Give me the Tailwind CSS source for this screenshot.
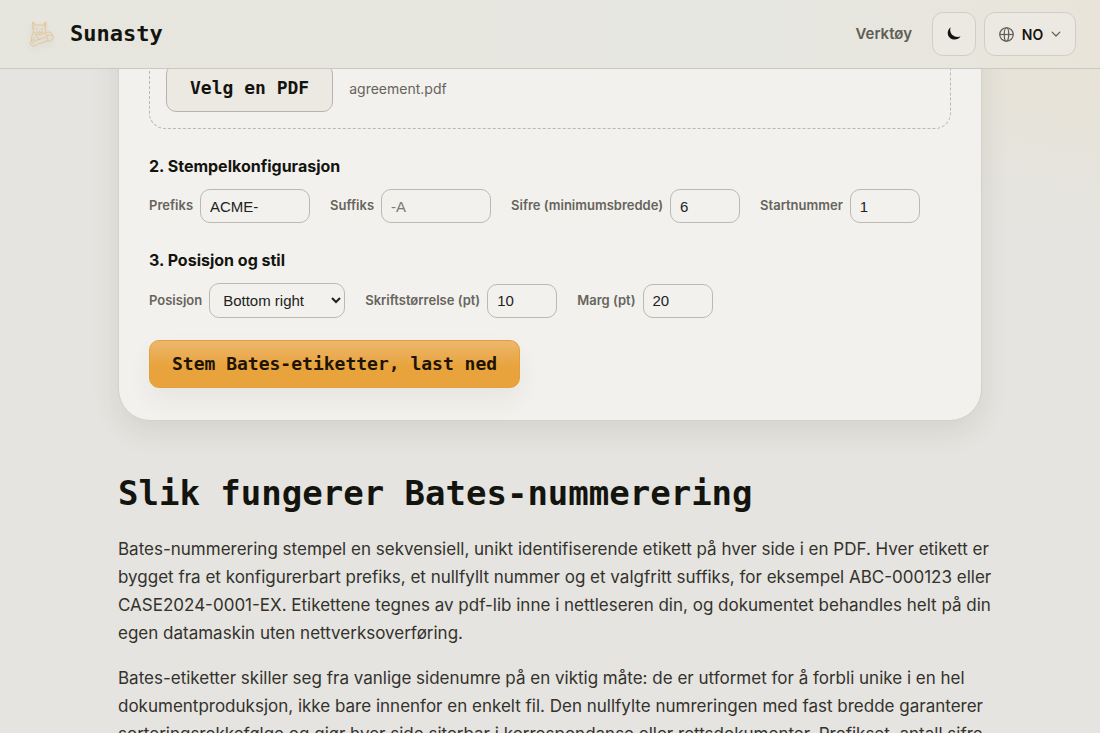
<!DOCTYPE html>
<html lang="no">
<head>
  <meta charset="UTF-8">
  <meta name="viewport" content="width=device-width, initial-scale=1.0">
  <script src="https://cdn.jsdelivr.net/npm/@tailwindcss/browser@4"></script>
  <title>Bates-nummerering - Sunasty</title>
</head>
<body class="bg-[#e5e4e0] bg-[radial-gradient(ellipse_280px_230px_at_1090px_0px,#e8e2d2,transparent)] bg-no-repeat font-['Inter',sans-serif] text-[#14140f]">

  <!-- Header -->
  <header class="fixed inset-x-0 top-0 z-10 flex h-[69px] items-center justify-between border-b border-[#cac9c3] bg-linear-to-r from-[#e6e6de] via-[#e7e7e1] via-70% to-[#e8e4d9] pr-6 pl-7">
    <a href="#" class="flex items-center gap-4">
      <svg class="size-[26px] drop-shadow-md" viewBox="0 0 26 26" fill="none" stroke="#e8bf8a" stroke-width="0.9" stroke-linejoin="round" stroke-linecap="round" aria-hidden="true">
        <path d="M5 7.500 4.600 1l4 3.300q2.700-.7 5.400 0l4-3.300-.4 6.500c.4 3.800-2.500 6-6.500 6S4.600 11.300 5 7.500z"/>
        <path d="M6 2.800 6.200 6M16.500 2.800 16.300 6"/>
        <path d="M5.200 11.500C3.800 14.500 3 18 3.500 20.500M17 11.500c1.300 1.300 2 3 2 5"/>
        <path d="M8 13.500c.5 2 1.500 3.500 3 4.500M6 16.500l-.5 3"/>
        <path d="M4.500 19c-2.500 1.500-3 5.500.5 6 1.500 0 3-1 4.500-1.800l6.500-2c2.500-.7 4.500-1.500 3.500-3.700-1-1.800-3.500-.8-5.500 0L7.500 19.500 4.500 22"/>
        <path d="M18 11.800c2-1.500 5-1 6.200 1.200 1.300 2.300 1.300 5-.4 6.200-1.300.8-3 .8-4.800.6M19.500 14.500c1.500-1 3-1 4.200.2"/>
        <path d="M8 7.800h1.200M13.500 7.800h1.200M10.800 9.800l.6.6.6-.6M8.300 11q3 1.600 6.200 0"/>
      </svg>
      <span class="font-['DejaVu_Sans_Mono',monospace] text-[22px] leading-8 font-bold">Sunasty</span>
    </a>
    <nav class="flex items-center gap-2">
      <a href="#" class="mr-3 text-[15px] font-semibold text-[#5f5d54]">Verktøy</a>
      <button type="button" aria-label="Mørkt tema" class="flex size-11 items-center justify-center rounded-[11px] border border-[#d0cec6] bg-[#ece9e2]">
        <svg class="size-[14px]" viewBox="0 0 14 14" fill="#14140f" aria-hidden="true">
          <path d="M3.600.2C-.1 3.300-.2 8.300 3 10.900c3.300 2.600 8.300 2 10.600-1.300-2.800.9-6 .5-8.200-1.500C3.300 6 2.700 3 3.600.2z"/>
        </svg>
      </button>
      <button type="button" class="flex h-11 w-[92px] items-center justify-center gap-2 rounded-[11px] border border-[#d0cec6] bg-[#ece9e2] text-[14px] font-semibold">
        <svg class="size-[15px]" viewBox="0 0 16 16" fill="none" stroke="#5f5d54" stroke-width="1.300" aria-hidden="true">
          <circle cx="8" cy="8" r="7.200"/>
          <ellipse cx="8" cy="8" rx="2.400" ry="7.200"/>
          <path d="M.8 8h14.400"/>
        </svg>
        NO
        <svg class="size-[10px]" viewBox="0 0 10 10" fill="none" stroke="#5f5d54" stroke-width="1.200" stroke-linecap="round" stroke-linejoin="round" aria-hidden="true">
          <path d="M1.200 3.200 5 7l3.800-3.800"/>
        </svg>
      </button>
    </nav>
  </header>

  <main class="mx-auto max-w-[864px] pb-16">
    <!-- Tool card -->
    <form class="rounded-[32px] border border-[#d3d2cb] bg-[#f2f1ed] px-[30px] pt-[46px] pb-8 shadow-[0_10px_28px_rgba(60,55,40,0.1)]">
      <div class="flex items-center gap-4 rounded-2xl border border-dashed border-[#b9b8b1] p-4">
        <button type="button" class="h-12 rounded-[10px] border border-[#b5b4ad] bg-[#ece9e3] px-[23px] pb-[2px] font-['DejaVu_Sans_Mono',monospace] text-[18px] font-bold">Velg en PDF</button>
        <span class="text-[14px] text-[#66645c]">agreement.pdf</span>
      </div>

      <h3 class="mt-[25px] text-[16px] leading-6 font-bold">2. Stempelkonfigurasjon</h3>
      <div class="mt-[11px] flex flex-wrap items-center gap-5 text-[13px] font-semibold text-[#66645c]">
        <label class="flex items-center gap-[7px]">Prefiks
          <input type="text" value="ACME-" class="h-[34px] w-[110px] rounded-[10px] border border-[#bab9b3] px-[9px] font-['Liberation_Sans',sans-serif] text-[15px] font-normal text-[#22221c]">
        </label>
        <label class="flex items-center gap-[7px]">Suffiks
          <input type="text" placeholder="-A" class="h-[34px] w-[110px] rounded-[10px] border border-[#bab9b3] px-[9px] font-['Liberation_Sans',sans-serif] text-[15px] font-normal text-[#22221c] placeholder:text-[#7b7a74]">
        </label>
        <label class="flex items-center gap-[7px]">Sifre (minimumsbredde)
          <input type="text" inputmode="numeric" value="6" class="h-[34px] w-[70px] rounded-[10px] border border-[#bab9b3] px-[9px] font-['Liberation_Sans',sans-serif] text-[15px] font-normal text-[#22221c]">
        </label>
        <label class="flex items-center gap-[7px]">Startnummer
          <input type="text" inputmode="numeric" value="1" class="h-[34px] w-[70px] rounded-[10px] border border-[#bab9b3] px-[9px] font-['Liberation_Sans',sans-serif] text-[15px] font-normal text-[#22221c]">
        </label>
      </div>

      <h3 class="mt-[25px] text-[16px] leading-6 font-bold">3. Posisjon og stil</h3>
      <div class="mt-[11px] flex flex-wrap items-center gap-5 text-[13px] font-semibold text-[#66645c]">
        <label class="flex items-center gap-[7px]">Posisjon
          <select class="h-[35px] w-[136px] rounded-[10px] border border-[#bab9b3] px-[9px] font-['Liberation_Sans',sans-serif] text-[15px] font-normal text-[#22221c]">
            <option>Bottom right</option>
            <option>Bottom left</option>
            <option>Top right</option>
          </select>
        </label>
        <label class="flex items-center gap-[7px]">Skriftstørrelse (pt)
          <input type="text" inputmode="numeric" value="10" class="h-[34px] w-[70px] rounded-[10px] border border-[#bab9b3] px-[9px] font-['Liberation_Sans',sans-serif] text-[15px] font-normal text-[#22221c]">
        </label>
        <label class="flex items-center gap-[7px]">Marg (pt)
          <input type="text" inputmode="numeric" value="20" class="h-[34px] w-[70px] rounded-[10px] border border-[#bab9b3] px-[9px] font-['Liberation_Sans',sans-serif] text-[15px] font-normal text-[#22221c]">
        </label>
      </div>

      <button type="submit" class="mt-[22px] block h-12 rounded-[10px] border border-[#e2a03c] bg-linear-to-b from-[#edb76b] to-[#e8a33c] to-55% px-[22px] pb-[2px] font-['DejaVu_Sans_Mono',monospace] text-[18px] font-bold text-[#1d1405] shadow-[0_12px_24px_rgba(60,55,40,0.06)]">Stem Bates-etiketter, last ned</button>
    </form>

    <!-- Article -->
    <h2 class="mt-[50px] font-['DejaVu_Sans_Mono',monospace] text-[34px] leading-[44px] font-bold">Slik fungerer Bates-nummerering</h2>
    <div class="-mr-3 mt-5 space-y-[17px] text-[17px] leading-7 text-[#33322c]">
      <p>Bates-nummerering stempel en sekvensiell, unikt identifiserende etikett på hver side i en PDF. Hver etikett er bygget fra et konfigurerbart prefiks, et nullfyllt nummer og et valgfritt suffiks, for eksempel ABC-000123 eller CASE2024-0001-EX. Etikettene tegnes av pdf-lib inne i nettleseren din, og dokumentet behandles helt på din egen datamaskin uten nettverksoverføring.</p>
      <p>Bates-etiketter skiller seg fra vanlige sidenumre på en viktig måte: de er utformet for å forbli unike i en hel dokumentproduksjon, ikke bare innenfor en enkelt fil. Den nullfylte numreringen med fast bredde garanterer sorteringsrekkefølge og gjør hver side siterbar i korrespondanse eller rettsdokumenter. Prefikset, antall sifre</p>
    </div>
  </main>
</body>
</html>
